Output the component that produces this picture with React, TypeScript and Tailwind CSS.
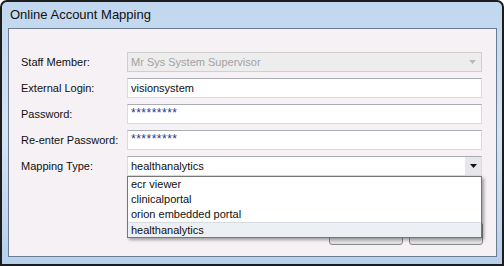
const font = { fontFamily: '"Liberation Sans", Arial, sans-serif' }

function Caret({ color }: { color: string }) {
    return (
        <svg width="7" height="4" viewBox="0 0 7 4">
            <path d="M0 0H7L3.5 4Z" fill={color} />
        </svg>
    )
}

function TextRow({ label, value, password }: { label: string; value: string; password?: boolean }) {
    return (
        <div className="flex h-[20px] items-center">
            <div className="w-[106px] text-[11px] text-[#101010]">{label}</div>
            <div className="flex h-[20px] w-[355px] items-center border border-[#d8dbe2] border-t-[#a9acb3] bg-white pl-[3px]">
                {password ? (
                    <span className="mt-[-2px] text-[12px] tracking-[0.5px] text-[#1d3a8c]">{value}</span>
                ) : (
                    <span className="text-[11px] text-[#101010]">{value}</span>
                )}
            </div>
        </div>
    )
}

export default function App() {
    const options = ["ecr viewer", "clinicalportal", "orion embedded portal", "healthanalytics"]

    return (
        <div className="h-[266px] w-[504px] bg-white" style={font}>
            <div className="flex h-full w-full flex-col rounded-t-[7px] border-2 border-[#1c1c1c] bg-gradient-to-b from-[#c0d7ef] via-[#d3e4f5] to-[#b6d0eb] pb-[7px] pl-[6px] pr-[5px]">

                <div className="flex h-[26px] items-center pl-[2px] text-[13px] text-[#111]">
                    Online Account Mapping
                </div>

                <div className="flex-1 border border-[#6b7b90] bg-[#f5f1f5] pl-[12px] pr-[14px] pt-[23px]">

                    <div className="flex flex-col gap-[6px]">

                        <div className="flex h-[20px] items-center">
                            <div className="w-[106px] text-[11px] text-[#101010]">Staff Member:</div>
                            <div className="flex h-[20px] w-[355px] items-center justify-between border border-[#cfcfcf] bg-[#ededed] pl-[3px] pr-[5px]">
                                <span className="text-[11px] text-[#a2a2a2]">Mr Sys System Supervisor</span>
                                <Caret color="#b9b9b9" />
                            </div>
                        </div>

                        <TextRow label="External Login:" value="visionsystem" />
                        <TextRow label="Password:" value="*********" password />
                        <TextRow label="Re-enter Password:" value="*********" password />

                        <div className="flex h-[20px] items-center">
                            <div className="w-[106px] text-[11px] text-[#101010]">Mapping Type:</div>
                            <div className="relative h-[20px] w-[355px]">
                                <div className="flex h-full items-center justify-between border border-[#d8dbe2] border-t-[#a9acb3] bg-white pl-[3px]">
                                    <span className="text-[11px] text-[#101010]">healthanalytics</span>
                                    <div className="flex h-full w-[16px] items-center justify-center bg-[#e6e6eb]">
                                        <Caret color="#111" />
                                    </div>
                                </div>

                                <div className="absolute left-0 top-full z-10 w-full border border-[#767676] bg-white shadow-[2px_2px_3px_rgba(0,0,0,0.35)]">
                                    {options.map((o, i) => (
                                        <div
                                            key={o}
                                            className={
                                                i === options.length - 1
                                                    ? "flex h-[15px] items-center border-t border-[#d5dae3] bg-[#eceff4] pl-[3px] text-[11px] text-[#101010]"
                                                    : "flex h-[15px] items-center pl-[3px] text-[11px] text-[#101010]"
                                            }
                                        >
                                            {o}
                                        </div>
                                    ))}
                                </div>
                            </div>
                        </div>

                    </div>

                    <div className="mr-[-1px] mt-[46px] flex justify-end gap-[6px]">
                        <button className="h-[23px] w-[74px] rounded-[3px] border border-[#8a8a8a] bg-gradient-to-b from-[#f3f3f3] to-[#e0e0e0] text-[11px] text-[#101010]">
                            OK
                        </button>
                        <button className="h-[23px] w-[74px] rounded-[3px] border border-[#8a8a8a] bg-gradient-to-b from-[#f3f3f3] to-[#e0e0e0] text-[11px] text-[#101010]">
                            Cancel
                        </button>
                    </div>

                </div>
            </div>
        </div>
    )
}
